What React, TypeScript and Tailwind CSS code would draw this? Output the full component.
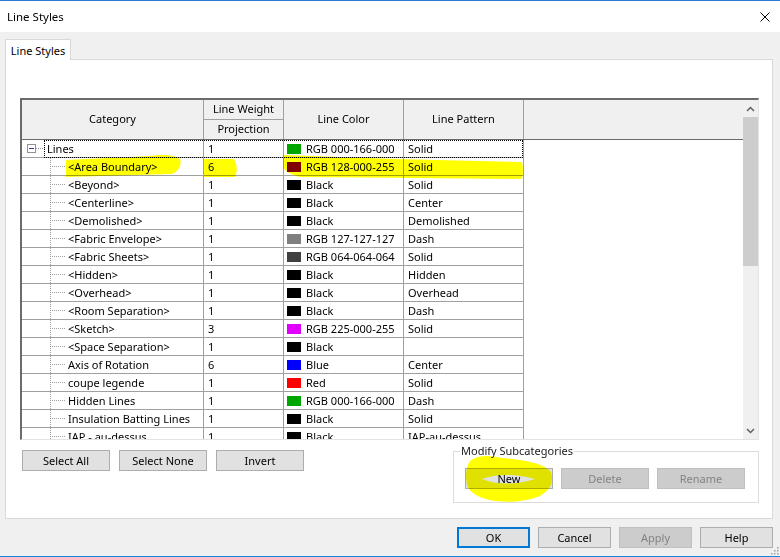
import React from "react";

type Row = {
  name: string;
  weight: string;
  swatch: string;
  color: string;
  pattern: string;
  root?: boolean;
};

const rows: Row[] = [
  { name: "Lines", weight: "1", swatch: "#00a600", color: "RGB 000-166-000", pattern: "Solid", root: true },
  { name: "<Area Boundary>", weight: "6", swatch: "#8000ff", color: "RGB 128-000-255", pattern: "Solid" },
  { name: "<Beyond>", weight: "1", swatch: "#000000", color: "Black", pattern: "Solid" },
  { name: "<Centerline>", weight: "1", swatch: "#000000", color: "Black", pattern: "Center" },
  { name: "<Demolished>", weight: "1", swatch: "#000000", color: "Black", pattern: "Demolished" },
  { name: "<Fabric Envelope>", weight: "1", swatch: "#7f7f7f", color: "RGB 127-127-127", pattern: "Dash" },
  { name: "<Fabric Sheets>", weight: "1", swatch: "#404040", color: "RGB 064-064-064", pattern: "Solid" },
  { name: "<Hidden>", weight: "1", swatch: "#000000", color: "Black", pattern: "Hidden" },
  { name: "<Overhead>", weight: "1", swatch: "#000000", color: "Black", pattern: "Overhead" },
  { name: "<Room Separation>", weight: "1", swatch: "#000000", color: "Black", pattern: "Dash" },
  { name: "<Sketch>", weight: "3", swatch: "#e100ff", color: "RGB 225-000-255", pattern: "Solid" },
  { name: "<Space Separation>", weight: "1", swatch: "#000000", color: "Black", pattern: "" },
  { name: "Axis of Rotation", weight: "6", swatch: "#0000ff", color: "Blue", pattern: "Center" },
  { name: "coupe legende", weight: "1", swatch: "#ff0000", color: "Red", pattern: "Solid" },
  { name: "Hidden Lines", weight: "1", swatch: "#00a600", color: "RGB 000-166-000", pattern: "Dash" },
  { name: "Insulation Batting Lines", weight: "1", swatch: "#000000", color: "Black", pattern: "Solid" },
  { name: "IAP - au-dessus", weight: "1", swatch: "#000000", color: "Black", pattern: "IAP-au-dessus" },
];

function TreeLines({ root }: { root?: boolean }) {
  if (root) {
    return (
      <svg width="25" height="17" className="shrink-0">
        <rect x="5.5" y="4.5" width="8" height="8" fill="#fff" stroke="#919191" />
        <line x1="7" y1="8.5" x2="12" y2="8.5" stroke="#2a3f8f" />
        <line x1="14" y1="8.5" x2="23" y2="8.5" stroke="#a0a0a0" strokeDasharray="1 1" />
      </svg>
    );
  }
  return (
    <svg width="45" height="17" className="shrink-0">
      <line x1="28.5" y1="0" x2="28.5" y2="17" stroke="#a0a0a0" strokeDasharray="1 1" />
      <line x1="30" y1="8.5" x2="43" y2="8.5" stroke="#a0a0a0" strokeDasharray="1 1" />
    </svg>
  );
}

function Button({
  label,
  disabled,
  primary,
  className = "",
}: {
  label: string;
  disabled?: boolean;
  primary?: boolean;
  className?: string;
}) {
  const tone = disabled
    ? "bg-[#cccccc] border border-[#bfbfbf] text-[#838383]"
    : primary
      ? "bg-[#e1e1e1] border-2 border-[#0078d7] text-black"
      : "bg-[#e1e1e1] border border-[#adadad] text-black";
  return (
    <div className={`flex h-[21px] items-center justify-center text-[11px] leading-none ${tone} ${className}`}>
      {label}
    </div>
  );
}

function Chevron({ up }: { up?: boolean }) {
  return (
    <svg width="9" height="6" viewBox="0 0 9 6">
      <path d={up ? "M1 5 L4.5 1.5 L8 5" : "M1 1 L4.5 4.5 L8 1"} fill="none" stroke="#606060" strokeWidth="1.5" />
    </svg>
  );
}

export default function App() {
  return (
    <div className="relative flex h-[557px] w-[780px] flex-col overflow-hidden border-t border-b border-t-[#2b7bd0] border-b-[#1883d7] bg-[#f0f0f0] font-['Noto_Sans',sans-serif] text-black">
      {/* title bar */}
      <div className="flex h-[31px] shrink-0 items-center justify-between bg-white pl-[7px] pr-[10px]">
        <span className="text-[11.5px] leading-none">Line Styles</span>
        <svg width="10" height="10" viewBox="0 0 10 10">
          <path d="M0.5 0.5 L9.5 9.5 M9.5 0.5 L0.5 9.5" stroke="#000" strokeWidth="1" />
        </svg>
      </div>

      <div className="flex flex-col pl-[5px] pt-[7px]">
        <div className="relative z-10 -mb-px flex h-[21px] w-[66px] items-center justify-center border border-b-0 border-[#d9d9d9] bg-white text-[11px] leading-none">
          Line Styles
        </div>
        <div className="flex h-[460px] w-[768px] flex-col border border-[#d9d9d9] bg-white pl-[14px] pt-[38px]">
          {/* grid */}
          <div className="flex h-[342px] w-[739px] overflow-hidden border-l-2 border-t-2 border-r border-b border-l-[#6b6b6b] border-t-[#6b6b6b] border-r-[#e3e3e3] border-b-[#e3e3e3]">
            <div className="flex w-[721px] flex-col text-[11px]">
              <div className="flex h-[40px] shrink-0 border-b border-[#6b6b6b] bg-[#f0f0f0]">
                <div className="flex w-[182px] items-center justify-center border-r border-[#a0a0a0]">Category</div>
                <div className="flex w-[80px] flex-col border-r border-[#a0a0a0]">
                  <div className="flex h-[20px] items-center justify-center border-b border-[#a0a0a0]">Line Weight</div>
                  <div className="flex flex-1 items-center justify-center">Projection</div>
                </div>
                <div className="flex w-[120px] items-center justify-center border-r border-[#a0a0a0]">Line Color</div>
                <div className="flex w-[120px] items-center justify-center border-r border-[#a0a0a0]">Line Pattern</div>
                <div className="flex-1" />
              </div>
              {rows.map((r) => (
                <div key={r.name} className="relative flex h-[18px] shrink-0">
                  <div className="flex w-[502px] border-b border-[#a0a0a0] leading-[17px]">
                    <div className="flex w-[182px] items-center overflow-hidden whitespace-nowrap border-r border-[#a0a0a0]">
                      <TreeLines root={r.root} />
                      <span className={r.root ? "pl-[0px]" : "pl-[1px]"}>{r.name}</span>
                    </div>
                    <div className="w-[80px] border-r border-[#a0a0a0] pl-[4px]">{r.weight}</div>
                    <div className="flex w-[120px] items-center border-r border-[#a0a0a0] pl-[3px]">
                      <span className="h-[10px] w-[14px] shrink-0" style={{ backgroundColor: r.swatch }} />
                      <span className="pl-[5px] whitespace-nowrap">{r.color}</span>
                    </div>
                    <div className="w-[120px] whitespace-nowrap border-r border-[#a0a0a0] pl-[4px]">{r.pattern}</div>
                  </div>
                  {r.root ? (
                    <div className="pointer-events-none absolute left-[22px] top-0 h-[18px] w-[479px] border border-dotted border-black" />
                  ) : null}
                </div>
              ))}
            </div>
            {/* scrollbar */}
            <div className="flex w-[15px] flex-col bg-[#f0f0f0]">
              <div className="flex h-[17px] items-center justify-center">
                <Chevron up />
              </div>
              <div className="h-[149px] bg-[#cdcdcd]" />
              <div className="flex-1" />
              <div className="flex h-[17px] items-center justify-center">
                <Chevron />
              </div>
            </div>
          </div>

          {/* below grid */}
          <div className="mt-[10px] flex w-[739px] justify-between">
            <div className="ml-[2px] flex gap-[9px]">
              <Button label="Select All" className="w-[88px]" />
              <Button label="Select None" className="w-[88px]" />
              <Button label="Invert" className="w-[88px]" />
            </div>
            <div className="relative mt-[1px] h-[52px] w-[306px] border border-[#dcdcdc] pl-[11px] pt-[16px]">
              <span className="absolute -top-[8px] left-[6px] bg-white px-[1px] text-[11px] leading-[14px] text-[#1a1a1a]">
                Modify Subcategories
              </span>
              <div className="flex gap-[8px]">
                <Button label="New" className="w-[88px]" />
                <Button label="Delete" disabled className="w-[88px]" />
                <Button label="Rename" disabled className="w-[88px]" />
              </div>
            </div>
          </div>
        </div>
      </div>

      {/* footer */}
      <div className="flex flex-1 justify-end gap-[8px] pr-[7px] pt-[8px]">
        <Button label="OK" primary className="w-[73px]" />
        <Button label="Cancel" className="w-[73px]" />
        <Button label="Apply" disabled className="w-[73px]" />
        <Button label="Help" className="w-[73px]" />
      </div>

      {/* resize grip */}
      <svg width="9" height="9" className="absolute bottom-[1px] right-[1px]">
        {[
          [7, 1],
          [7, 4],
          [4, 4],
          [7, 7],
          [4, 7],
          [1, 7],
        ].map(([x, y]) => (
          <rect key={`${x}-${y}`} x={x} y={y} width="1.5" height="1.5" fill="#a0a0a0" />
        ))}
      </svg>

      {/* yellow marker strokes */}
      <svg width="780" height="557" className="pointer-events-none absolute left-0 top-0 mix-blend-multiply">
        <path d="M66 159 L150 155 Q172 152 180 158 Q183 168 172 173 L66 176 Z" fill="#ffff00" />
        <path d="M204 158 L234 158 Q239 167 235 176 L204 176 Z" fill="#ffff00" />
        <path d="M283 154 L395 158 L522 161 Q524 170 522 178 L420 177 L300 176 Q284 172 283 165 Z" fill="#ffff00" />
        <path
          fillRule="evenodd"
          d="M470 460 Q480 452 502 457 Q542 460 551 471 Q556 486 540 495 Q520 503 495 500 Q471 496 467 484 Q464 469 470 460 Z M482 478 Q505 470 535 478 Q505 487 482 478 Z"
          fill="#ffff00"
        />
      </svg>
    </div>
  );
}
